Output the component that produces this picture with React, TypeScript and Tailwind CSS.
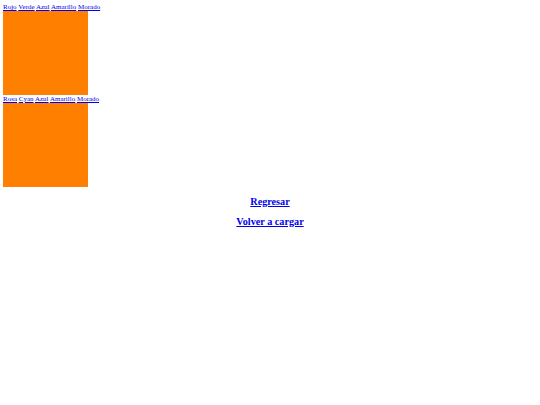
const serif = { fontFamily: '"Liberation Serif", "Times New Roman", serif' };

function Links({ items }: { items: string[] }) {
  return (
    <div className="text-[7px] leading-[8px]">
      {items.map((t, i) => (
        <span key={t}>
          <a href="#" className="text-[#0000ee] underline">
            {t}
          </a>
          {i < items.length - 1 ? " " : ""}
        </span>
      ))}
    </div>
  );
}

export default function App() {
  return (
    <div className="bg-white min-h-[405px] p-[3px] text-black" style={serif}>
      <Links items={["Rojo", "Verde", "Azul", "Amarillo", "Morado"]} />
      <div className="w-[85px] h-[84px] bg-[#ff8000]" />
      <Links items={["Rosa", "Cyan", "Azul", "Amarillo", "Morado"]} />
      <div className="w-[85px] h-[84px] bg-[#ff8000]" />
      <div className="mt-[8px] text-center text-[10.2px] font-bold leading-[13px]">
        <a href="#" className="text-[#0000ee] underline">
          Regresar
        </a>
      </div>
      <div className="mt-[7px] text-center text-[10.2px] font-bold leading-[13px]">
        <a href="#" className="text-[#0000ee] underline">
          Volver a cargar
        </a>
      </div>
    </div>
  );
}
